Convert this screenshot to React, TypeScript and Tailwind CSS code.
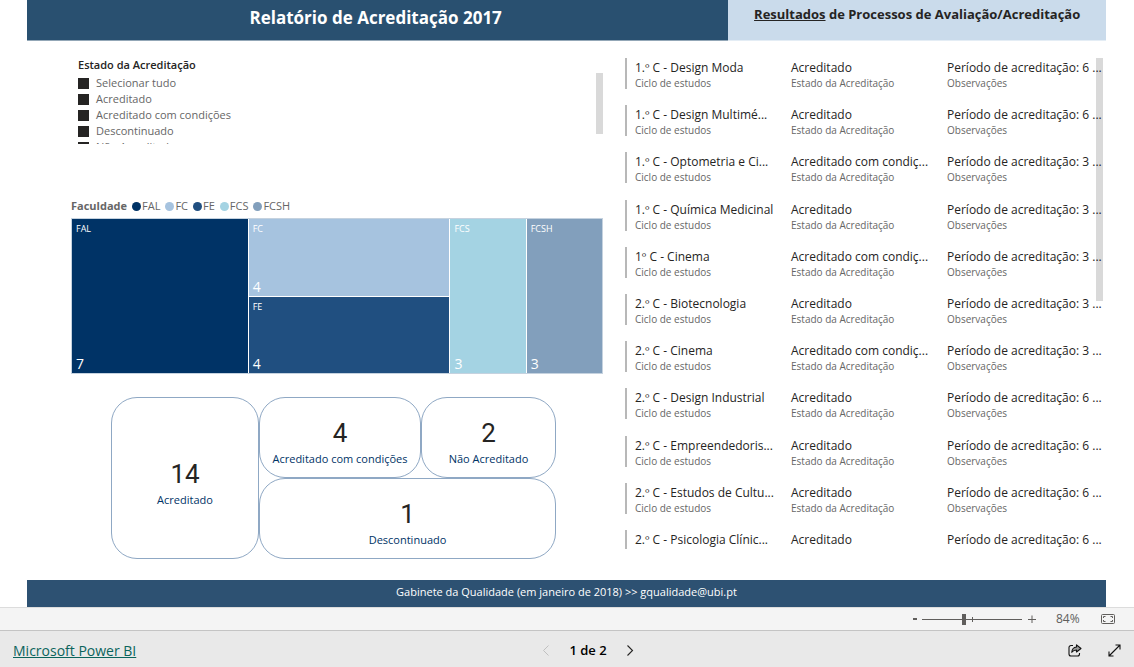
import React, { useState } from 'react';

const states = ['Selecionar tudo', 'Acreditado', 'Acreditado com condições', 'Descontinuado', 'Não Acreditado'];

const faculties = [
  { name: 'FAL', count: 7, dot: 'bg-[#003366]', cell: 'bg-[#003366] row-span-2' },
  { name: 'FC', count: 4, dot: 'bg-[#a6c3df]', cell: 'bg-[#a6c3df]' },
  { name: 'FE', count: 4, dot: 'bg-[#204f80]', cell: 'bg-[#204f80] col-start-2' },
  { name: 'FCS', count: 3, dot: 'bg-[#a4d3e3]', cell: 'bg-[#a4d3e3] row-span-2 col-start-3 row-start-1' },
  { name: 'FCSH', count: 3, dot: 'bg-[#829fbc]', cell: 'bg-[#829fbc] row-span-2 col-start-4 row-start-1' },
];

const courses = [
  { name: '1.º C - Design Moda', status: 'Acreditado', years: 6 },
  { name: '1.º C - Design Multimé...', status: 'Acreditado', years: 6 },
  { name: '1.º C - Optometria e Ci...', status: 'Acreditado com condiç...', years: 3 },
  { name: '1.º C - Química Medicinal', status: 'Acreditado', years: 3 },
  { name: '1º C - Cinema', status: 'Acreditado com condiç...', years: 3 },
  { name: '2.º C - Biotecnologia', status: 'Acreditado', years: 3 },
  { name: '2.º C - Cinema', status: 'Acreditado com condiç...', years: 3 },
  { name: '2.º C - Design Industrial', status: 'Acreditado', years: 6 },
  { name: '2.º C - Empreendedoris...', status: 'Acreditado', years: 6 },
  { name: '2.º C - Estudos de Cultu...', status: 'Acreditado', years: 6 },
  { name: '2.º C - Psicologia Clínic...', status: 'Acreditado', years: 6 },
];

const Field: React.FC<{ value: string; label: string }> = ({ value, label }) => (
  <div className="whitespace-nowrap">
    <p className="text-[12px] leading-[19px] text-[#252423]">{value}</p>
    <p className="text-[10px] leading-[12px] text-[#666666]">{label}</p>
  </div>
);

const Card: React.FC<{ value: number; label: string; className: string }> = ({ value, label, className }) => (
  <div className={`flex flex-col items-center justify-center rounded-[26px] border border-[#8fa8c4] pt-[11px] whitespace-nowrap ${className}`}>
    <p className="font-[Roboto,sans-serif] text-[26px] leading-[32px] text-[#252423]">{value}</p>
    <p className="text-[11px] leading-[20px] text-[#003366]">{label}</p>
  </div>
);

const App: React.FC = () => {
  const [zoom, setZoom] = useState(84);
  const [page, setPage] = useState(1);

  return (
    <div className="flex min-h-screen flex-col bg-white font-['Open_Sans','Noto_Sans',sans-serif]">
      <main className="flex flex-1 flex-col pr-7 pl-[27px]">
        <header className="grid grid-cols-[65fr_35fr] text-center">
          <h1 className="h-[41px] border-b border-[#93a7b7] bg-[#295070] pt-1 pr-1 text-[17px] leading-7 font-bold text-white">
            Relatório de Acreditação 2017
          </h1>
          <h2 className="h-[41px] border-b border-[#e4edf5] bg-[#cadbeb] pt-1 text-[13px] leading-5 font-bold text-[#252423]">
            <span className="underline">Resultados</span> de Processos de Avaliação/Acreditação
          </h2>
        </header>

        <div className="flex flex-1 pt-[17px]">
          <div className="flex flex-1 flex-col pr-[22px] pl-11">
            <fieldset className="flex h-[86px] items-start justify-between overflow-hidden pl-[7px]">
              <div>
                <legend className="pb-[3px] text-[11px] leading-[14px] font-semibold text-[#252423]">Estado da Acreditação</legend>
                {states.map((s) => (
                  <label key={s} className="flex h-4 items-center gap-[7px] text-[11px] text-[#666666]">
                    <input type="checkbox" defaultChecked className="size-[11px] appearance-none bg-[#252423]" />
                    {s}
                  </label>
                ))}
              </div>
              <div className="mt-[15px] h-[61px] w-[7px] bg-[#d9d9d9]" />
            </fieldset>

            <section className="mt-[52px]">
              <div className="flex h-[22px] items-start gap-[5px] text-[11px] leading-5 text-[#666666]">
                <h3 className="font-bold">Faculdade</h3>
                {faculties.map((f) => (
                  <span key={f.name} className="flex items-center gap-px">
                    <span className={`size-[9px] rounded-full ${f.dot}`} />
                    {f.name}
                  </span>
                ))}
              </div>
              <div className="grid h-[156px] grid-cols-[7fr_8fr_3fr_3fr] grid-rows-2 gap-px border border-[#c5d2df] bg-white text-white">
                {faculties.map((f) => (
                  <div key={f.name} className={`flex flex-col justify-between px-1 ${f.cell}`}>
                    <p className="text-[9px] leading-[19px]">{f.name}</p>
                    <p className="text-[14px] leading-[19px]">{f.count}</p>
                  </div>
                ))}
              </div>
            </section>

            <section className="mt-[23px] mr-[47px] ml-10 grid h-[162px] grid-cols-[148fr_162fr_135fr] grid-rows-2">
              <Card value={14} label="Acreditado" className="row-span-2" />
              <Card value={4} label="Acreditado com condições" className="" />
              <Card value={2} label="Não Acreditado" className="" />
              <Card value={1} label="Descontinuado" className="col-span-2" />
            </section>
          </div>

          <section className="relative mr-[3px] h-[491px] w-[478px] overflow-hidden">
            <ul className="relative z-10 flex h-[503px] flex-col justify-between">
              {courses.map((c) => (
                <li key={c.name} className="grid h-[31px] grid-cols-3 border-l-2 border-[#b8b8b8] pl-2">
                  <Field value={c.name} label="Ciclo de estudos" />
                  <Field value={c.status} label="Estado da Acreditação" />
                  <Field value={`Período de acreditação: ${c.years} ...`} label="Observações" />
                </li>
              ))}
            </ul>
            <div className="absolute top-0 right-0 h-[243px] w-[7px] bg-[#d9d9d9]" />
          </section>
        </div>

        <footer className="mt-auto h-[27px] bg-[#2d5172] text-center text-[11px] leading-[24px] text-white">
          Gabinete da Qualidade (em janeiro de 2018) &gt;&gt; gqualidade@ubi.pt
        </footer>
      </main>

      <div className="flex h-6 items-center justify-end border-y border-t-[#dcdcdc] border-b-[#c4c4c4] bg-[#f4f4f4] pr-[18px] text-[#605e5c]">
        <button aria-label="Reduzir" onClick={() => setZoom(zoom - 10)} className="flex h-4 w-[14px] items-center justify-center">
          <span className="h-[2px] w-1 bg-[#605e5c]" />
        </button>
        <div className="relative flex w-[100px] items-center">
          <input
            type="range"
            aria-label="Zoom"
            min={0}
            max={200}
            value={zoom}
            onChange={(e) => setZoom(Number(e.target.value))}
            className="h-px w-full appearance-none bg-[#605e5c] [&::-webkit-slider-thumb]:h-[11px] [&::-webkit-slider-thumb]:w-1 [&::-webkit-slider-thumb]:appearance-none [&::-webkit-slider-thumb]:bg-[#605e5c]"
          />
          <span className="absolute left-1/2 h-[5px] w-px bg-[#605e5c]" />
        </div>
        <button aria-label="Ampliar" onClick={() => setZoom(zoom + 10)} className="flex h-4 w-5 items-center justify-center">
          <svg width="8" height="8" viewBox="0 0 8 8" stroke="#605e5c" fill="none"><path d="M0 4.5h8M4 .5v8" /></svg>
        </button>
        <span className="w-[50px] pl-[14px] text-[12px]">{zoom}%</span>
        <button aria-label="Ajustar à página" className="ml-[9px]">
          <svg width="15" height="12" viewBox="0 0 15 12" fill="none" stroke="#605e5c">
            <rect x=".5" y="1.5" width="13" height="9" rx="1" />
            <path d="M4.5 3.5h-2v1.500M2.500 7v1.500h2M9.500 3.500h2V5M11.500 7v1.500h-2" />
          </svg>
        </button>
      </div>

      <nav className="grid h-9 grid-cols-3 items-center bg-[#e9e9e9] pt-[3px] pr-[13px] pl-[13px]">
        <a href="#" className="justify-self-start text-[14px] leading-5 text-[#0b645c] underline">Microsoft Power BI</a>
        <div className="flex items-center justify-center gap-[19px] pl-[42px] text-[13px] font-semibold text-black">
          <button aria-label="Página anterior" disabled={page === 1} onClick={() => setPage(1)} className="text-[#252423] disabled:text-[#c0c0c0]">
            <svg width="8" height="11" viewBox="0 0 8 11" fill="none" stroke="currentColor"><path d="M6.500.5 1.500 5.500l5 5" /></svg>
          </button>
          <span>{page} de 2</span>
          <button aria-label="Página seguinte" disabled={page === 2} onClick={() => setPage(2)} className="text-[#252423] disabled:text-[#c0c0c0]">
            <svg width="8" height="11" viewBox="0 0 8 11" fill="none" stroke="currentColor" strokeWidth="1.1"><path d="M1.500.5l5 5-5 5" /></svg>
          </button>
        </div>
        <div className="flex items-center justify-end gap-[26px]">
          <button aria-label="Partilhar">
            <svg width="14" height="13" viewBox="0 0 14 13" fill="none" stroke="#111" strokeWidth="1.1" strokeLinejoin="round">
              <path d="M5 1.500H3A2 2 0 0 0 1 3.500v6.500a2 2 0 0 0 2 2h6.500a2 2 0 0 0 2-2V9" />
              <path d="M8.500.8 13 4.500 8.500 8V6C6.500 6 5 6.600 3.800 8.300 4 5.200 5.800 3.200 8.500 3Z" fill="#999" />
            </svg>
          </button>
          <button aria-label="Ecrã inteiro">
            <svg width="13" height="13" viewBox="0 0 13 13" fill="none" stroke="#111" strokeWidth="1.1">
              <path d="M1 12 12 1M7.500 1H12v4.500M1 7.500V12h4.500" />
            </svg>
          </button>
        </div>
      </nav>
    </div>
  );
};

export default App;
